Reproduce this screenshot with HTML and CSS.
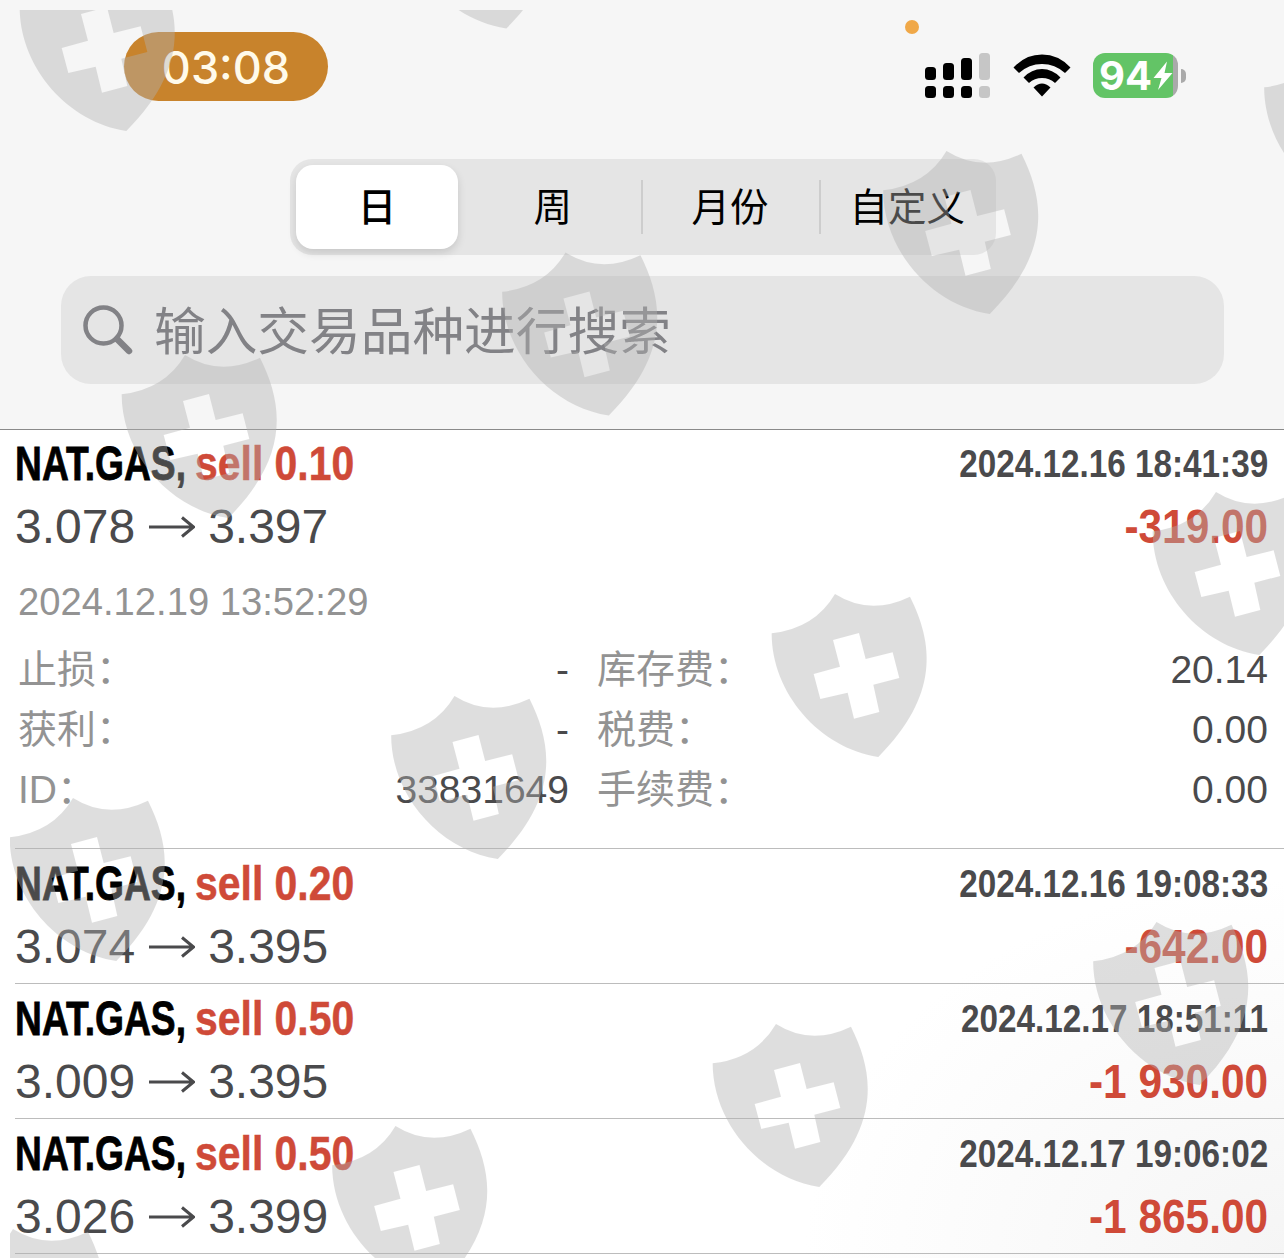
FILE: index.html
```
<!DOCTYPE html>
<html lang="zh-CN">

<head>
    <meta charset="UTF-8">
    <meta name="viewport" content="width=device-width, initial-scale=1.0">
    <title>交易历史</title>
    <link rel="stylesheet" href="styles.css">
</head>

<body>
    <div class="screen">
        <header class="header">
            <!-- Status bar -->
            <div class="status-bar">
                <div class="time">03:08</div>
                <span class="mic-dot"></span>
                <div class="status-icons">
                    <svg class="signal" width="66" height="46" viewBox="0 0 66 46">
                        <rect x="0" y="14" width="11" height="13" rx="3.5" />
                        <rect x="18" y="10" width="11" height="17" rx="3.5" />
                        <rect x="36" y="5" width="11" height="22" rx="3.5" />
                        <rect class="off" x="54" y="0" width="11" height="27" rx="3.5" />
                        <rect x="0" y="33" width="11" height="12" rx="3.5" />
                        <rect x="18" y="33" width="11" height="12" rx="3.5" />
                        <rect x="36" y="33" width="11" height="12" rx="3.5" />
                        <rect class="off" x="54" y="33" width="11" height="12" rx="3.5" />
                    </svg>
                    <svg class="wifi" width="58" height="44" viewBox="0 0 58 44">
                        <path d="M0.5 13.5 Q12.5 0.5 29 0.5 Q45.5 0.5 57.5 13.5 L52 19 Q42 10 29 10 Q16 10 6 19 Z" />
                        <path d="M10.5 23.5 Q18.5 15 29 15 Q39.5 15 47.5 23.5 L42 29 Q36.5 24 29 24 Q21.5 24 16 29 Z" />
                        <path d="M20.5 33.5 Q29 25.5 37.5 33.5 L29 42.5 Z" />
                    </svg>
                    <div class="battery">
                        <span class="level">94</span>
                        <svg class="bolt" width="20" height="30" viewBox="0 0 20 30">
                            <path d="M14 0.5 L0.5 17 L8.5 17 L5 29 L19.5 12 L11.5 12 Z" />
                        </svg>
                    </div>
                    <span class="battery-cap"></span>
                </div>
            </div>

            <!-- Period tabs -->
            <nav class="tabs">
                <div class="tab active">日</div>
                <div class="tab">周</div>
                <div class="tab">月份</div>
                <div class="tab">自定义</div>
            </nav>

            <div class="search">
                <svg class="search-icon" width="50" height="50" viewBox="0 0 50 50">
                    <circle cx="20.5" cy="20.5" r="18" />
                    <path d="M34 34 L46 46" />
                </svg>
                <span>输入交易品种进行搜索</span>
            </div>
        </header>

        <!-- Deals -->
        <main class="deals">
            <div class="deal open">
                <div class="line">
                    <span class="symbol">NAT.GAS,</span>
                    <span class="side">sell 0.10</span>
                    <span class="date">2024.12.16 18:41:39</span>
                </div>
                <div class="line prices">
                    <span>3.078</span>
                    <svg class="arrow" viewBox="0 0 46 22"><path d="M0 11 H44 M33 1.5 L44.5 11 L33 20.5" /></svg>
                    <span>3.397</span>
                    <span class="profit">-319.00</span>
                </div>
                <div class="close-date">2024.12.19 13:52:29</div>
                <div class="details">
                    <span class="label">止损：</span><span class="value">-</span>
                    <span class="label">库存费：</span><span class="value">20.14</span>
                    <span class="label">获利：</span><span class="value">-</span>
                    <span class="label">税费：</span><span class="value">0.00</span>
                    <span class="label">ID：</span><span class="value">33831649</span>
                    <span class="label">手续费：</span><span class="value">0.00</span>
                </div>
            </div>

            <div class="deal">
                <div class="line">
                    <span class="symbol">NAT.GAS,</span>
                    <span class="side">sell 0.20</span>
                    <span class="date">2024.12.16 19:08:33</span>
                </div>
                <div class="line prices">
                    <span>3.074</span>
                    <svg class="arrow" viewBox="0 0 46 22"><path d="M0 11 H44 M33 1.5 L44.5 11 L33 20.5" /></svg>
                    <span>3.395</span>
                    <span class="profit">-642.00</span>
                </div>
            </div>

            <div class="deal">
                <div class="line">
                    <span class="symbol">NAT.GAS,</span>
                    <span class="side">sell 0.50</span>
                    <span class="date">2024.12.17 18:51:11</span>
                </div>
                <div class="line prices">
                    <span>3.009</span>
                    <svg class="arrow" viewBox="0 0 46 22"><path d="M0 11 H44 M33 1.5 L44.5 11 L33 20.5" /></svg>
                    <span>3.395</span>
                    <span class="profit">-1 930.00</span>
                </div>
            </div>

            <div class="deal">
                <div class="line">
                    <span class="symbol">NAT.GAS,</span>
                    <span class="side">sell 0.50</span>
                    <span class="date">2024.12.17 19:06:02</span>
                </div>
                <div class="line prices">
                    <span>3.026</span>
                    <svg class="arrow" viewBox="0 0 46 22"><path d="M0 11 H44 M33 1.5 L44.5 11 L33 20.5" /></svg>
                    <span>3.399</span>
                    <span class="profit">-1 865.00</span>
                </div>
            </div>
        </main>

        <!-- Shield watermark over the whole screen -->
        <svg class="watermark" width="1284" height="1258" viewBox="0 0 1284 1258">
            <defs>
                <path id="shield" fill-rule="evenodd" transform="scale(0.3333)" d="M35 160 Q165 145 225 42 Q330 108 450 50 C520 190 540 345 355 531 C180 505 35 340 35 160 Z
                    M219 180 L297 159 L317 237 L398 217 L418 294 L340 314 L358 396 L282 416 L263 338 L181 357 L161 282 L240 260 Z" />
            </defs>
            <use href="#shield" x="8" y="-46" />
            <use href="#shield" x="388" y="-148.5" />
            <use href="#shield" x="110" y="341" />
            <use href="#shield" x="490.5" y="238.5" />
            <use href="#shield" x="871.5" y="137" />
            <use href="#shield" x="1252.5" y="34" />
            <use href="#shield" x="-2" y="784" />
            <use href="#shield" x="379.5" y="682" />
            <use href="#shield" x="760" y="580" />
            <use href="#shield" x="1141" y="478" />
            <use href="#shield" x="-62" y="1215" />
            <use href="#shield" x="320.5" y="1112" />
            <use href="#shield" x="701" y="1010" />
            <use href="#shield" x="1081.5" y="908" />
        </svg>
    </div>
</body>

</html>
```
FILE: styles.css
```
* {
    box-sizing: border-box;
}

body {
    margin: 0;
    font-family: "Liberation Sans", "Noto Sans CJK SC", sans-serif;
    background-color: #fff;
}

.screen {
    position: relative;
    width: 1284px;
    height: 1258px;
    overflow: hidden;
    background: radial-gradient(ellipse 480px 380px at 1284px 1258px, #f5f5f5, #fff);
}

/* Header */
.header {
    height: 430px;
    padding-top: 32px;
    background-color: #f6f6f6;
    border-bottom: 1px solid #8a8a8a;
}

.status-bar {
    position: relative;
    display: flex;
    justify-content: space-between;
    height: 127px;
    padding: 0 98px 0 124px;
}

.time {
    width: 204px;
    height: 69px;
    border-radius: 35px;
    background-color: #c8832c;
    color: #fffaea;
    font-family: Inter, sans-serif;
    font-size: 45px;
    font-weight: 500;
    line-height: 71px;
    text-align: center;
}

.mic-dot {
    position: absolute;
    left: 905px;
    top: -12px;
    width: 14px;
    height: 14px;
    border-radius: 50%;
    background-color: #f0a848;
}

.status-icons {
    display: flex;
    align-items: center;
    height: 45px;
    margin-top: 21px;
}

.signal .off {
    fill: #c6c6c6;
}

.wifi {
    margin-left: 22px;
}

.battery {
    display: flex;
    align-items: center;
    width: 85px;
    height: 45px;
    margin-left: 22px;
    padding-left: 6px;
    border-radius: 12px;
    background: linear-gradient(to right, #63c466 80px, #aaa 80px);
}

.level {
    width: 54px;
    color: #fff;
    font-family: Inter, sans-serif;
    font-size: 40px;
    font-weight: 700;
    line-height: 45px;
}

.bolt {
    fill: #fff;
}

.battery-cap {
    width: 5px;
    height: 14px;
    margin-left: 3px;
    border-radius: 0 5px 5px 0;
    background-color: #aaa;
}

/* Tabs */
.tabs {
    display: flex;
    width: 706px;
    height: 96px;
    margin-left: 290px;
    padding: 6px 0 6px 6px;
    border-radius: 22px;
    background-color: #e5e5e5;
}

.tab {
    position: relative;
    flex: 1;
    font-size: 38.5px;
    line-height: 86px;
    text-align: center;
    color: #000;
}

.tab.active {
    flex: 0 0 162px;
    margin-right: 6px;
    border-radius: 17px;
    background-color: #fff;
    box-shadow: 0 4px 8px rgba(0, 0, 0, 0.13);
    font-weight: 500;
}

/* Separators between the inactive tabs */
.tab + .tab + .tab::before {
    content: "";
    position: absolute;
    left: 0;
    top: 15px;
    width: 2px;
    height: 54px;
    background-color: #cdcdcd;
}

/* Search */
.search {
    display: flex;
    align-items: center;
    width: 1163px;
    height: 108px;
    margin: 21px 0 0 61px;
    padding-left: 22px;
    border-radius: 30px;
    background-color: #e5e5e5;
    color: #828286;
    font-size: 51.7px;
    line-height: 104px;
}

.search span {
    padding-top: 3px;
}

.search-icon {
    margin-right: 21px;
    fill: none;
    stroke: #828286;
    stroke-width: 4.5;
    stroke-linecap: round;
}

.search-icon path {
    stroke-width: 6.5;
}

/* Deals */
.deal {
    height: 135px;
    margin-left: 15px;
    padding: 3px 16px 0 0;
    border-bottom: 1px solid #bcbcbc;
}

.deal.open {
    height: 419px;
    padding-top: 2px;
}

.line {
    display: flex;
    align-items: center;
    height: 63px;
    line-height: 63px;
    white-space: nowrap;
}

/* Bold text is condensed */
.symbol,
.side,
.date,
.profit {
    font-weight: bold;
    font-size: 49px;
}

.symbol {
    width: 180px;
    transform: scaleX(0.76);
    transform-origin: left;
    -webkit-text-stroke: 0.8px #000;
}

.side {
    width: 200px;
    color: #cf4a38;
    transform: scaleX(0.835);
    transform-origin: left;
    -webkit-text-stroke: 0.5px #cf4a38;
}

.date {
    margin-left: auto;
    color: #4a4a4c;
    font-size: 39px;
    line-height: 61px;
    transform: scaleX(0.853);
    transform-origin: right;
}

.prices {
    color: #4a4a4c;
    font-size: 48px;
}

.arrow {
    width: 46px;
    height: 22px;
    margin: 0 13px 0 14px;
    fill: none;
    stroke: #4a4a4c;
    stroke-width: 3;
}

.profit {
    margin-left: auto;
    color: #cf4a38;
    transform: scaleX(0.865);
    transform-origin: right;
}

.close-date {
    height: 79px;
    padding-left: 3px;
    color: #939393;
    font-size: 38.2px;
    line-height: 88px;
}

.details {
    display: grid;
    grid-template-columns: 150px 401px 200px 1fr;
    grid-auto-rows: 60px;
    margin-top: 3px;
    padding-left: 3px;
    font-size: 39px;
    line-height: 60px;
}

.label {
    color: #939393;
}

.label:nth-child(4n + 3) {
    padding-left: 28px;
}

.value {
    color: #4a4a4c;
    text-align: right;
}

/* Watermark */
.watermark {
    position: absolute;
    left: 0;
    top: 0;
    fill: #b2b2b2;
    opacity: 0.416;
    clip-path: inset(10px 0 0 10px);
}
```
